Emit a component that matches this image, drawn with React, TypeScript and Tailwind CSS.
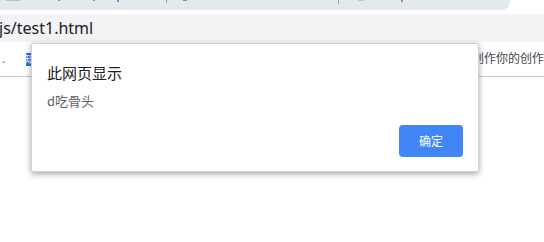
const TAB_TICKS = [
  { gap: 'ml-[6px]', cls: 'h-[1px] w-[14px] bg-[#b9c0c4]' },
  { gap: 'ml-[38px]', cls: 'h-[1px] w-[2px] bg-[#a08a60]' },
  { gap: 'ml-[33px]', cls: 'h-[1px] w-[2px] bg-[#8a8f94]' },
  { gap: 'ml-[22px]', cls: 'h-[2px] w-[2px] bg-[#7b8ea0]' },
  { gap: 'ml-[47px]', cls: 'h-[3px] w-[1px] bg-[#9aa0a6]' },
  { gap: 'ml-[16px]', cls: 'h-[1px] w-[4px] bg-[#8a8f94]' },
  { gap: 'ml-[151px]', cls: 'h-[4px] w-[1px] bg-[#9aa0a6]' },
  { gap: 'ml-[19px]', cls: 'h-[1px] w-[6px] bg-[#c2c6ca]' },
  { gap: 'ml-[37px]', cls: 'h-[2px] w-[2px] bg-[#c08850]' },
];

export default function App() {
  return (
    <div
      className="relative w-[544px] h-[242px] overflow-hidden bg-white"
      style={{ fontFamily: '"Noto Sans", "Noto Sans CJK SC", sans-serif' }}
    >
      {/* tab strip remnant */}
      <div className="h-[10px] bg-white">
        <div className="flex h-full w-[510px] items-start rounded-br-[8px] bg-[#e3eaee]">
          {TAB_TICKS.map((t, i) => (
            <span key={i} className={`${t.gap} ${t.cls}`} />
          ))}
        </div>
      </div>
      <div className="h-[4px] bg-white" />

      {/* address bar */}
      <div className="flex h-[28px] items-center bg-[#f1f3f4] text-[16px] text-[#202124]">
        <span className="-ml-[1px] leading-none">js/test1.html</span>
      </div>

      {/* bookmarks row */}
      <div className="flex h-[35px] items-center border-b border-[#c8c8c8] text-[12px]">
        <span className="ml-[2px] text-[#5f6368]">.</span>
        <span className="ml-[21px] flex h-[13px] w-[6px] items-center justify-center bg-[#1a73e8] text-[10px] text-white">
          知
        </span>
        <span className="ml-auto whitespace-nowrap text-[#444]">划创作你的创作</span>
      </div>

      {/* alert dialog */}
      <div className="absolute left-[31px] top-[43px] flex h-[129px] w-[448px] flex-col rounded-[2px] border border-[#d0d0d0] bg-white px-[15px] pt-[18px] pb-[14px] shadow-[0_2px_6px_rgba(0,0,0,0.35)]">
        <div
          className="text-[15px] leading-[21px] text-[#202124]"
          style={{ fontFamily: '"Noto Sans CJK SC", sans-serif' }}
        >
          此网页显示
        </div>
        <div
          className="mt-[9px] text-[13px] leading-[18px] text-[#5f6368]"
          style={{ fontFamily: '"Noto Sans CJK SC", sans-serif' }}
        >
          d吃骨头
        </div>
        <div className="mt-auto flex justify-end">
          <button
            className="h-[32px] w-[64px] rounded-[4px] bg-[#4285f4] text-[12px] text-white"
            style={{ fontFamily: '"Noto Sans CJK SC", sans-serif' }}
          >
            确定
          </button>
        </div>
      </div>
    </div>
  );
}
